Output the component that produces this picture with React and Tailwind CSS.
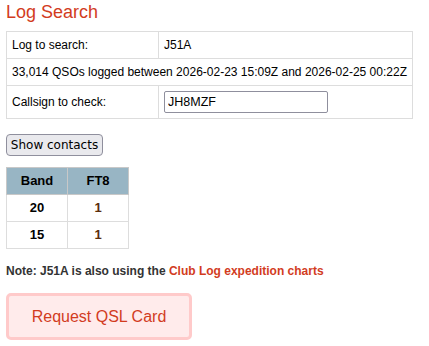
export default function App() {
  const cell = "border border-[#dddddd] px-[5px] h-[27px] align-middle whitespace-nowrap";
  return (
    <div className="bg-white w-[429px] h-[346px] overflow-hidden px-[6px] text-[12px] text-black" style={{ fontFamily: '"Liberation Sans", Arial, sans-serif' }}>
      <h1 className="text-[18px] leading-[21px] pt-[2px] text-[#d23c1e] font-normal">Log Search</h1>
      <table className="border-collapse table-fixed mt-[8px] w-[407px] text-[12px]">
        <colgroup>
          <col className="w-[152px]" />
          <col />
        </colgroup>
        <tbody>
          <tr>
            <td className={cell}>Log to search:</td>
            <td className={cell}>J51A</td>
          </tr>
          <tr>
            <td className={cell} colSpan={2}>33,014 QSOs logged between 2026-02-23 15:09Z and 2026-02-25 00:22Z</td>
          </tr>
          <tr>
            <td className={cell + " h-[33px]"}>Callsign to check:</td>
            <td className={cell + " h-[33px]"}>
              <input
                defaultValue="JH8MZF"
                className="w-[164px] h-[22px] border border-[#8f8f9d] rounded-[2px] px-[3px] text-[12.5px] text-black outline-none block"
                style={{ fontFamily: '"Liberation Sans", Arial, sans-serif' }}
              />
            </td>
          </tr>
        </tbody>
      </table>
      <button
        className="mt-[15px] block h-[22px] w-[97px] border border-[#8f8f9d] rounded-[4px] bg-[#e9e9ed] text-[12px] text-black leading-none"
        style={{ fontFamily: '"DejaVu Sans", Verdana, sans-serif' }}
      >
        Show contacts
      </button>
      <table className="border-collapse mt-[11px] w-[123px] text-center font-bold text-[13px]">
        <thead>
          <tr>
            <th className="border border-[#c8c8c8] bg-[#98b5c4] h-[27px] w-[61px]">Band</th>
            <th className="border border-[#c8c8c8] bg-[#98b5c4] h-[27px]">FT8</th>
          </tr>
        </thead>
        <tbody>
          <tr>
            <td className="border border-[#dddddd] h-[27px]">20</td>
            <td className="border border-[#dddddd] h-[27px] text-[#5a2d0c]">1</td>
          </tr>
          <tr>
            <td className="border border-[#dddddd] h-[27px]">15</td>
            <td className="border border-[#dddddd] h-[27px] text-[#5a2d0c]">1</td>
          </tr>
        </tbody>
      </table>
      <p className="mt-[15px] text-[12px] font-bold text-[#333333] leading-[14px]">
        Note: J51A is also using the <span className="text-[#d23c1e]">Club Log expedition charts</span>
      </p>
      <div className="mt-[15px] w-[186px] h-[47px] rounded-[5px] border-[3px] border-[#ffcaca] bg-[#ffebeb] flex items-center justify-center text-[16px] text-[#d23c1e]">
        Request QSL Card
      </div>
    </div>
  );
}
